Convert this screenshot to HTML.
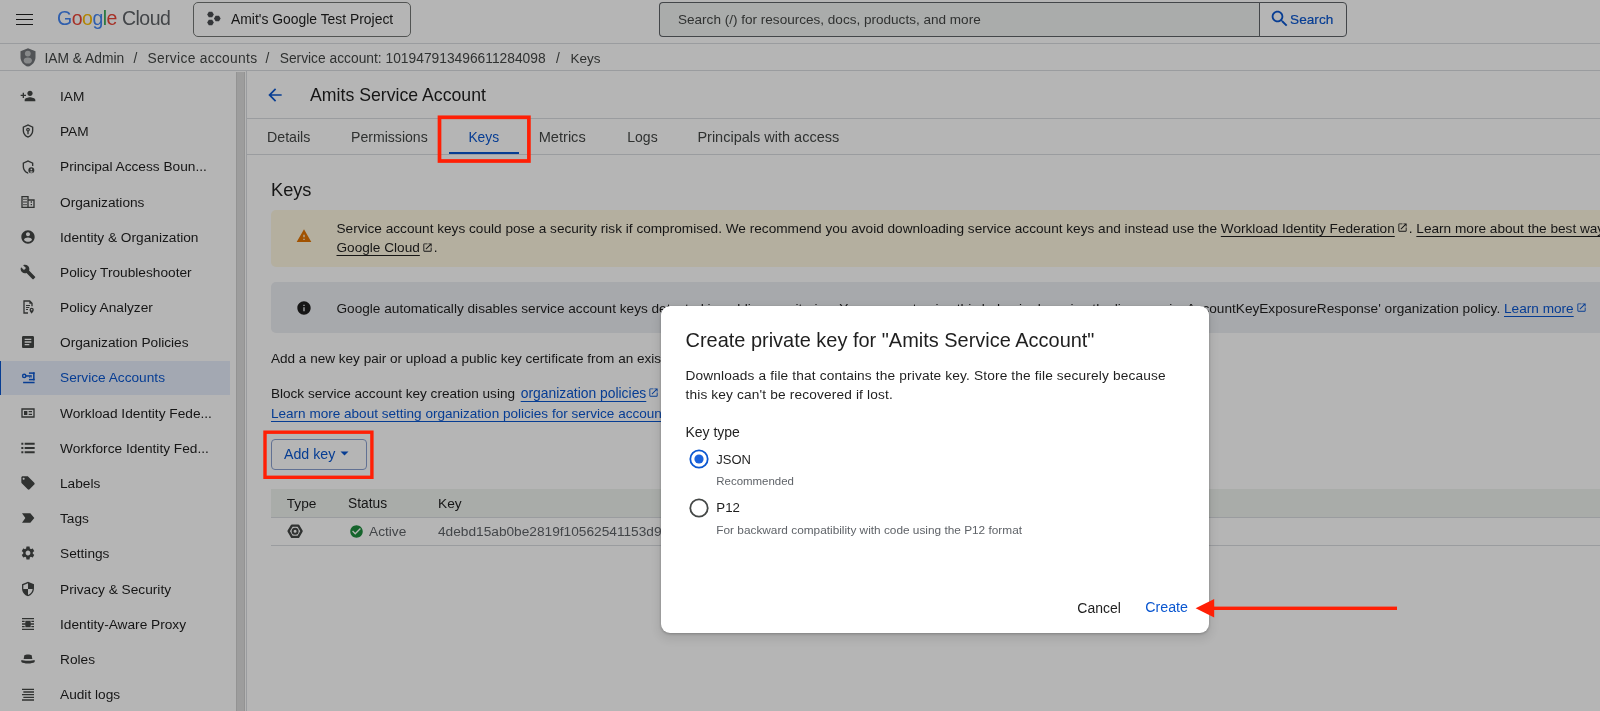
<!DOCTYPE html>
<html><head><meta charset="utf-8">
<style>
html,body{margin:0;padding:0}
body{width:1600px;height:711px;overflow:hidden;position:relative;background:#fff;font-family:"Liberation Sans",sans-serif;color:#1f1f1f}
.a{position:absolute}
.t{position:absolute;line-height:1;white-space:nowrap}
.ln{position:absolute;background:#dadce0}
svg{position:absolute;overflow:visible}
.ext{position:static;display:inline-block;vertical-align:-0.5px;margin:0 1px 0 2px}
u{text-decoration-skip-ink:none;text-underline-offset:2.5px;text-decoration-thickness:1px}
#ov{position:absolute;left:0;top:0;width:1600px;height:711px;background:rgba(0,0,0,0.29)}
.nav .t{font-size:13.7px;color:#1f1f1f;left:60px}
.nav svg{left:20px;width:16px;height:16px}
</style></head><body>
<div id="page" style="position:absolute;left:0;top:0;width:1600px;height:711px;will-change:transform">
<!-- TOP BAR -->
<div class="ln" style="left:0;top:43px;width:1600px;height:1px"></div>
<div class="a" style="left:16px;top:13.6px;width:17px;height:1.7px;background:#1f1f1f"></div>
<div class="a" style="left:16px;top:18.6px;width:17px;height:1.7px;background:#1f1f1f"></div>
<div class="a" style="left:16px;top:23.6px;width:17px;height:1.7px;background:#1f1f1f"></div>
<div class="t" style="left:57px;top:9.3px;font-size:19.5px;letter-spacing:-0.5px"><span style="color:#4285f4">G</span><span style="color:#ea4335">o</span><span style="color:#fbbc04">o</span><span style="color:#4285f4">g</span><span style="color:#34a853">l</span><span style="color:#ea4335">e</span> <span style="color:#5f6368">Cloud</span></div>
<div class="a" style="left:192.5px;top:2px;width:216px;height:33px;border:1px solid #747775;border-radius:5px"></div>
<svg style="left:200px;top:5px" width="30" height="25" viewBox="0 0 30 25"><path fill="#4a4d51" d="M7.15 9.50L8.82 6.75H12.18L13.85 9.50L12.18 12.25H8.82zM13.95 13.50L15.62 10.75H18.98L20.65 13.50L18.98 16.25H15.62zM7.15 17.60L8.82 14.85H12.18L13.85 17.60L12.18 20.35H8.82z"/></svg>
<div class="t" style="left:231px;top:13.2px;font-size:13.9px;color:#1f1f1f">Amit's Google Test Project</div>
<div class="a" style="left:659px;top:2px;width:600px;height:33px;border:1px solid #5f6368;border-right:none;border-radius:4px 0 0 4px;background:#f0f2f1"></div>
<div class="a" style="left:1259px;top:2px;width:86px;height:33px;border:1px solid #5f6368;border-radius:0 4px 4px 0;background:#fff"></div>
<div class="t" style="left:678px;top:12.5px;font-size:13.56px;color:#444746">Search (/) for resources, docs, products, and more</div>
<svg style="left:1268.5px;top:8.2px" width="21.5" height="21.5" viewBox="0 0 24 24"><path fill="#0b57d0" d="M15.5 14h-.79l-.28-.27C15.41 12.59 16 11.110 16 9.5 16 5.91 13.09 3 9.5 3S3 5.910 3 9.5 5.91 16 9.5 16c1.61 0 3.09-.59 4.23-1.57l.27.28v.79l5 4.99L20.49 19l-4.99-5zm-6 0C7.01 14 5 11.99 5 9.5S7.01 5 9.5 5 14 7.01 14 9.5 11.99 14 9.5 14z"/></svg>
<div class="t" style="left:1290px;top:13.1px;font-size:13.6px;color:#0b57d0;-webkit-text-stroke:0.2px #0b57d0;letter-spacing:0.06px">Search</div>

<!-- BREADCRUMB -->
<div class="ln" style="left:0;top:70px;width:1600px;height:1px"></div>
<svg style="left:20px;top:48px" width="16" height="19" viewBox="0 0 16 19"><path fill="#72767a" d="M8 0.3L0.5 3.3v5.6c0 4.5 3.2 8.6 7.5 9.7 4.3-1.1 7.5-5.2 7.5-9.7V3.3z"/><circle cx="7.8" cy="5.6" r="2.9" fill="#fff" opacity=".55"/><ellipse cx="7.8" cy="12.5" rx="4.1" ry="3.1" fill="#fff" opacity=".55"/></svg>
<div class="t" style="left:44.4px;top:51.9px;font-size:13.8px;color:#444746">IAM &amp; Admin</div>
<div class="t" style="left:133.5px;top:51.9px;font-size:13.8px;color:#444746">/</div>
<div class="t" style="left:147.5px;top:51.9px;font-size:13.8px;color:#444746;letter-spacing:0.3px">Service accounts</div>
<div class="t" style="left:265.5px;top:51.9px;font-size:13.8px;color:#444746">/</div>
<div class="t" style="left:279.7px;top:51.9px;font-size:13.8px;color:#444746">Service account: 101947913496611284098</div>
<div class="t" style="left:556px;top:51.9px;font-size:13.8px;color:#444746">/</div>
<div class="t" style="left:570.6px;top:51.9px;font-size:13.5px;color:#444746">Keys</div>

<!-- SIDEBAR -->
<div class="a" style="left:236px;top:72px;width:7px;height:639px;background:#dedede;border-left:1px solid #d0d0d0;border-right:1px solid #d0d0d0"></div>
<div class="ln" style="left:246px;top:71px;width:1px;height:640px"></div>
<div class="a" style="left:0;top:360.5px;width:230px;height:34.5px;background:#e6edfb"></div>
<div class="a" style="left:0;top:360.8px;width:1px;height:34.2px;background:#0b57d0"></div>
<!--NAV--><div class="nav">
<svg style="left:19.5px;top:88.1px" width="17" height="17" viewBox="0 0 24 24"><g fill="#444746"><path d="M15 12c2.21 0 4-1.79 4-4s-1.79-4-4-4-4 1.79-4 4 1.79 4 4 4zm-9-2V7H4v3H1v2h3v3h2v-3h3v-2H6zm9 4c-2.67 0-8 1.34-8 4v2h16v-2c0-2.660-5.33-4-8-4z"/></g></svg>
<div class="t" style="top:90.0px;color:#1f1f1f">IAM</div>
<svg style="left:19.5px;top:123.3px" width="17" height="17" viewBox="0 0 24 24"><g fill="#444746"><path d="M12 2L4 5.5v5.6c0 5 3.4 9.7 8 10.9 4.6-1.2 8-5.9 8-10.9V5.5zm0 2.2l6 2.6v4.3c0 3.9-2.5 7.6-6 8.7-3.5-1.1-6-4.8-6-8.7V6.8z"/><path d="M12 7a3 3 0 0 0-1 5.8V17h2v-4.2A3 3 0 0 0 12 7zm0 2a1 1 0 1 1 0 2 1 1 0 0 1 0-2z"/></g></svg>
<div class="t" style="top:125.2px;color:#1f1f1f">PAM</div>
<svg style="left:19.5px;top:158.5px" width="17" height="17" viewBox="0 0 24 24"><g fill="#444746"><path d="M12 2L4 5.5v5.6c0 5 3.4 9.7 8 10.9l.6-.2-.6-1.9c-3.5-1.1-6-4.8-6-8.7V6.8l6-2.6 6 2.6v3.7h2V5.5z"/><path d="M17 12.5a4.5 4.5 0 1 0 0 9 4.5 4.5 0 0 0 0-9zm0 1.8a1.3 1.3 0 1 1 0 2.6 1.3 1.3 0 0 1 0-2.6zm-2.6 5.2c.6-.9 1.6-1.3 2.6-1.3s2 .4 2.6 1.3c-.7.7-1.6 1.1-2.6 1.1s-1.9-.4-2.6-1.1z"/></g></svg>
<div class="t" style="top:160.4px;color:#1f1f1f">Principal Access Boun...</div>
<svg style="left:19.5px;top:193.6px" width="17" height="17" viewBox="0 0 24 24"><g fill="#444746"><path d="M2 3h11v18H2zm2 2v14h7V5zm1 2h2v2H5zm3 0h2v2H8zM5 11h2v2H5zm3 0h2v2H8zM5 15h2v2H5zm3 0h2v2H8zM13 8h9v13h-9v-2h7v-9h-7zm3 3h2v2h-2zm0 4h2v2h-2z"/></g></svg>
<div class="t" style="top:195.5px;color:#1f1f1f">Organizations</div>
<svg style="left:19.5px;top:228.8px" width="17" height="17" viewBox="0 0 24 24"><g fill="#444746"><path d="M12 2C6.48 2 2 6.48 2 12s4.48 10 10 10 10-4.48 10-10S17.52 2 12 2zm0 3c1.66 0 3 1.34 3 3s-1.34 3-3 3-3-1.34-3-3 1.34-3 3-3zm0 14.2c-2.5 0-4.71-1.28-6-3.22.03-1.99 4-3.08 6-3.08 1.99 0 5.97 1.09 6 3.08-1.29 1.94-3.5 3.22-6 3.22z"/></g></svg>
<div class="t" style="top:230.7px;color:#1f1f1f">Identity &amp; Organization</div>
<svg style="left:19.5px;top:264.0px" width="17" height="17" viewBox="0 0 24 24"><g fill="#444746"><path d="M22.7 19l-9.1-9.1c.9-2.3.4-5-1.5-6.9-2-2-5-2.4-7.4-1.3L9 6 6 9 1.6 4.7C.4 7.1.9 10.1 2.9 12.1c1.9 1.9 4.6 2.4 6.9 1.5l9.1 9.1c.4.4 1 .4 1.4 0l2.3-2.3c.5-.4.5-1.1.1-1.4z"/></g></svg>
<div class="t" style="top:265.9px;color:#1f1f1f">Policy Troubleshooter</div>
<svg style="left:19.5px;top:299.2px" width="17" height="17" viewBox="0 0 24 24"><g fill="#444746"><path d="M5 2h10l4 4v5h-2V7h-3V4H7v16h5v2H5zm4 7h6v1.6H9zm0 3h5v1.6H9zm0 3h3v1.6H9z"/><path d="M17.5 13a3.2 3.2 0 0 0-3.2 3.2c0 2.3 3.2 5.8 3.2 5.8s3.2-3.5 3.2-5.8a3.2 3.2 0 0 0-3.2-3.2zm0 4.4a1.2 1.2 0 1 1 0-2.400 1.2 1.2 0 0 1 0 2.4z"/></g></svg>
<div class="t" style="top:301.1px;color:#1f1f1f">Policy Analyzer</div>
<svg style="left:19.5px;top:334.4px" width="17" height="17" viewBox="0 0 24 24"><g fill="#444746"><path d="M19 3H5c-1.1 0-2 .9-2 2v14c0 1.1.9 2 2 2h14c1.1 0 2-.9 2-2V5c0-1.1-.9-2-2-2zm-5 14H7v-2h7v2zm3-4H7v-2h10v2zm0-4H7V7h10v2z"/></g></svg>
<div class="t" style="top:336.3px;color:#1f1f1f">Organization Policies</div>
<svg style="left:19.5px;top:369.54px" width="17" height="17" viewBox="0 0 17 17"><g fill="#0b57d0"><circle cx="4.5" cy="6.3" r="1.75" fill="none" stroke="#0b57d0" stroke-width="1.5"/><rect x="6" y="5.5" width="6.5" height="1.6"/><rect x="9.6" y="7" width="1.1" height="1.1"/><rect x="11.2" y="7" width="1.1" height="1.1"/><rect x="9.5" y="2.5" width="6" height="1.6"/><rect x="13.9" y="2.5" width="1.6" height="8.5"/><rect x="9.5" y="9.4" width="6" height="1.6"/><rect x="3.3" y="12.5" width="12.2" height="1.6"/></g></svg>
<div class="t" style="top:371.4px;color:#0b57d0">Service Accounts</div>
<svg style="left:19.5px;top:404.7px" width="17" height="17" viewBox="0 0 24 24"><g fill="#444746"><path d="M2 5h20v14H2zm2 2v10h16V7zm2 2h5v6H6zm7 0h5v2h-5zm0 4h5v2h-5z"/></g></svg>
<div class="t" style="top:406.6px;color:#1f1f1f">Workload Identity Fede...</div>
<svg style="left:19.5px;top:439.9px" width="17" height="17" viewBox="0 0 24 24"><g fill="#444746"><path d="M2 4h3v3H2zm0 6.5h3v3H2zm0 6.5h3v3H2zM7 4h15v3H7zm0 6.5h15v3H7zm0 6.5h15v3H7z"/></g></svg>
<div class="t" style="top:441.8px;color:#1f1f1f">Workforce Identity Fed...</div>
<svg style="left:19.5px;top:475.1px" width="17" height="17" viewBox="0 0 24 24"><g fill="#444746"><path d="M21.41 11.58l-9-9C12.05 2.22 11.55 2 11 2H4c-1.1 0-2 .9-2 2v7c0 .55.22 1.05.59 1.42l9 9c.36.36.86.58 1.41.58.55 0 1.05-.22 1.41-.59l7-7c.37-.36.59-.86.59-1.41 0-.55-.23-1.06-.59-1.42zM5.5 7C4.67 7 4 6.33 4 5.5S4.67 4 5.5 4 7 4.67 7 5.5 6.33 7 5.5 7z"/></g></svg>
<div class="t" style="top:477.0px;color:#1f1f1f">Labels</div>
<svg style="left:19.5px;top:510.3px" width="17" height="17" viewBox="0 0 24 24"><g fill="#444746"><path d="M3 5h12.5l6 7-6 7H3l5-7z"/></g></svg>
<div class="t" style="top:512.2px;color:#1f1f1f">Tags</div>
<svg style="left:19.5px;top:545.4px" width="17" height="17" viewBox="0 0 24 24"><g fill="#444746"><path d="M19.14 12.94c.04-.3.06-.61.06-.94 0-.32-.02-.64-.07-.94l2.03-1.58c.18-.14.23-.41.12-.61l-1.92-3.32c-.12-.22-.37-.29-.59-.22l-2.39.96c-.5-.38-1.03-.7-1.62-.94l-.36-2.54c-.04-.24-.24-.41-.48-.41h-3.84c-.24 0-.43.17-.47.41l-.36 2.54c-.59.24-1.13.57-1.62.94l-2.39-.96c-.22-.08-.47 0-.59.22L2.74 8.87c-.12.21-.08.47.12.61l2.03 1.58c-.05.3-.09.63-.09.94s.02.64.07.94l-2.03 1.58c-.18.14-.23.41-.12.61l1.92 3.320c.12.22.37.29.59.22l2.39-.96c.5.38 1.03.7 1.62.94l.36 2.54c.05.24.24.41.48.41h3.84c.24 0 .44-.17.47-.41l.36-2.54c.59-.24 1.13-.56 1.62-.94l2.39.96c.22.08.47 0 .59-.22l1.92-3.32c.12-.22.07-.47-.12-.61l-2.01-1.58zM12 15.6c-1.98 0-3.6-1.62-3.6-3.6s1.62-3.6 3.6-3.6 3.6 1.62 3.6 3.6-1.62 3.6-3.6 3.6z"/></g></svg>
<div class="t" style="top:547.3px;color:#1f1f1f">Settings</div>
<svg style="left:19.5px;top:580.6px" width="17" height="17" viewBox="0 0 24 24"><g fill="#444746"><path d="M12 1L3 5v6c0 5.55 3.84 10.74 9 12 5.16-1.26 9-6.45 9-12V5l-9-4zm0 10.99h7c-.53 4.12-3.28 7.79-7 8.94V12H5V6.3l7-3.110v8.8z"/></g></svg>
<div class="t" style="top:582.5px;color:#1f1f1f">Privacy &amp; Security</div>
<svg style="left:19.5px;top:615.8px" width="17" height="17" viewBox="0 0 24 24"><g fill="#444746"><path d="M3 3h18v2H3zm0 16h18v2H3zM3 7h4v2H3zm14 0h4v2h-4zM3 15h4v2H3zm14 0h4v2h-4zM3 11h18v2H3zM8 7h8v10H8z"/></g></svg>
<div class="t" style="top:617.7px;color:#1f1f1f">Identity-Aware Proxy</div>
<svg style="left:19.5px;top:651.0px" width="17" height="17" viewBox="0 0 24 24"><g fill="#444746"><path d="M6.5 6.5c1.2-.8 3.2-1.3 5.5-1.3s4.3.5 5.5 1.3l1 5.5H5.5zM2 13.5c2 .7 5.5 1.2 10 1.2s8-.5 10-1.2v3c-2 1.4-5.5 2.3-10 2.3s-8-.9-10-2.3z"/></g></svg>
<div class="t" style="top:652.9px;color:#1f1f1f">Roles</div>
<svg style="left:19.5px;top:686.2px" width="17" height="17" viewBox="0 0 24 24"><g fill="#444746"><path d="M3 4h18v2H3zm2 4h16v2H5zm-2 4h18v2H3zm2 4h16v2H5zm-2 4h18v2H3z"/></g></svg>
<div class="t" style="top:688.1px;color:#1f1f1f">Audit logs</div>
</div><!--/NAV-->

<!-- MAIN HEADER -->
<svg style="left:265px;top:85px" width="20" height="20" viewBox="0 0 24 24"><path fill="#0b57d0" d="M20 11H7.83l5.59-5.59L12 4l-8 8 8 8 1.41-1.41L7.83 13H20v-2z"/></svg>
<div class="t" style="left:310px;top:86.5px;font-size:17.7px;color:#1f1f1f">Amits Service Account</div>
<div class="ln" style="left:247px;top:118px;width:1353px;height:1px"></div>
<div class="t" style="left:267px;top:129.5px;font-size:14.2px;color:#444746">Details</div>
<div class="t" style="left:351px;top:129.5px;font-size:14.1px;color:#444746">Permissions</div>
<div class="t" style="left:468.4px;top:130.9px;font-size:13.8px;color:#0b57d0">Keys</div>
<div class="t" style="left:538.7px;top:129.5px;font-size:14.6px;color:#444746">Metrics</div>
<div class="t" style="left:627.3px;top:129.5px;font-size:14px;color:#444746">Logs</div>
<div class="t" style="left:697.4px;top:129.5px;font-size:14.5px;color:#444746">Principals with access</div>
<div class="a" style="left:448.5px;top:152px;width:70.5px;height:2px;background:#0b57d0"></div>
<div class="ln" style="left:247px;top:154px;width:1353px;height:1px"></div>

<!-- KEYS CONTENT -->
<div class="t" style="left:271px;top:180.8px;font-size:18.2px;color:#1f1f1f">Keys</div>
<div class="a" style="left:271px;top:210px;width:1400px;height:56.6px;background:#fef7e0;border-radius:5px"></div>
<svg style="left:296px;top:228px" width="16" height="16" viewBox="0 0 24 24"><path fill="#e37400" d="M1 21h22L12 2 1 21zm12-3h-2v-2h2v2zm0-4h-2v-4h2v4z"/></svg>
<div class="t" style="left:336.5px;top:221.5px;font-size:13.64px;color:#1f1f1f">Service account keys could pose a security risk if compromised. We recommend you avoid downloading service account keys and instead use the <u>Workload Identity Federation</u><svg class="ext" width="11" height="11" viewBox="0 0 24 24"><path fill="#1f1f1f" d="M19 19H5V5h7V3H5c-1.11 0-2 .9-2 2v14c0 1.1.89 2 2 2h14c1.1 0 2-.9 2-2v-7h-2v7zM14 3v2h3.59l-9.830 9.83 1.41 1.41L19 6.41V10h2V3h-7z"/></svg>. <u>Learn more about the best way to secure service account keys on</u></div>
<div class="t" style="left:336.5px;top:241px;font-size:13.64px;color:#1f1f1f"><u>Google Cloud</u><svg class="ext" width="11" height="11" viewBox="0 0 24 24"><path fill="#1f1f1f" d="M19 19H5V5h7V3H5c-1.11 0-2 .9-2 2v14c0 1.1.89 2 2 2h14c1.1 0 2-.9 2-2v-7h-2v7zM14 3v2h3.59l-9.830 9.83 1.41 1.41L19 6.41V10h2V3h-7z"/></svg>.</div>
<div class="a" style="left:271px;top:282px;width:1400px;height:50.7px;background:#eceef2;border-radius:5px"></div>
<svg style="left:295.5px;top:299.5px" width="16" height="16" viewBox="0 0 24 24"><path fill="#1f1f1f" d="M12 2C6.48 2 2 6.48 2 12s4.48 10 10 10 10-4.48 10-10S17.52 2 12 2zm1 15h-2v-6h2v6zm0-8h-2V7h2v2z"/></svg>
<div class="t" style="left:336.5px;top:301.7px;font-size:13.64px;color:#1f1f1f">Google automatically disables service account keys detected in public repositories. You can customize this behavior by using the 'iam.serviceAccountKeyExposureResponse' organization policy. <u style="color:#0b57d0">Learn more</u><svg class="ext" width="11" height="11" viewBox="0 0 24 24"><path fill="#0b57d0" d="M19 19H5V5h7V3H5c-1.11 0-2 .9-2 2v14c0 1.1.89 2 2 2h14c1.1 0 2-.9 2-2v-7h-2v7zM14 3v2h3.59l-9.830 9.83 1.41 1.41L19 6.41V10h2V3h-7z"/></svg></div>

<div class="t" style="left:271px;top:352px;font-size:13.55px;color:#1f1f1f">Add a new key pair or upload a public key certificate from an existing service account.</div>
<div class="t" style="left:271px;top:386.9px;font-size:13.55px;color:#1f1f1f"><span>Block service account key creation using</span></div>
<div class="t" style="left:520.7px;top:386.9px;font-size:13.87px;color:#0b57d0"><u>organization policies</u><svg class="ext" width="11" height="11" viewBox="0 0 24 24"><path fill="#0b57d0" d="M19 19H5V5h7V3H5c-1.11 0-2 .9-2 2v14c0 1.1.89 2 2 2h14c1.1 0 2-.9 2-2v-7h-2v7zM14 3v2h3.59l-9.830 9.83 1.41 1.41L19 6.41V10h2V3h-7z"/></svg></div>
<div class="t" style="left:271px;top:406.5px;font-size:13.55px;color:#0b57d0"><u>Learn more about setting organization policies for service accounts</u></div>

<div class="a" style="left:271px;top:438.5px;width:93.5px;height:29.5px;border:1px solid #8aa0d0;border-radius:4px"></div>
<div class="t" style="left:284px;top:447px;font-size:14.2px;color:#0b57d0">Add key</div>
<svg style="left:340px;top:451px" width="9" height="5" viewBox="0 0 9 5"><path fill="#0b57d0" d="M0.5 0.5h8L4.5 4.5z"/></svg>

<div class="a" style="left:271px;top:489.3px;width:1329px;height:28px;background:#eef2ef"></div>
<div class="ln" style="left:271px;top:517px;width:1329px;height:1px"></div>
<div class="t" style="left:286.7px;top:497.2px;font-size:13.7px;color:#1f1f1f">Type</div>
<div class="t" style="left:348px;top:497.2px;font-size:13.8px;color:#1f1f1f">Status</div>
<div class="t" style="left:438px;top:497.2px;font-size:13.7px;color:#1f1f1f">Key</div>
<div class="ln" style="left:271px;top:545px;width:1329px;height:1px"></div>
<svg style="left:287px;top:524px" width="16" height="15" viewBox="0 0 16 15"><path fill="none" stroke="#444746" stroke-width="2.3" stroke-linejoin="round" d="M1.6 7.2L4.9 1.6h6.4l3.3 5.6-3.3 5.6H4.9z"/><circle cx="8.1" cy="7.2" r="2.5" fill="none" stroke="#444746" stroke-width="2"/></svg>
<svg style="left:348.5px;top:524px" width="15" height="15" viewBox="0 0 24 24"><path fill="#1e8e3e" d="M12 2C6.48 2 2 6.48 2 12s4.48 10 10 10 10-4.48 10-10S17.52 2 12 2zm-2 15l-5-5 1.41-1.41L10 14.17l7.59-7.59L19 8l-9 9z"/></svg>
<div class="t" style="left:369px;top:524.9px;font-size:13.7px;color:#5f6368">Active</div>
<div class="t" style="left:438px;top:524.9px;font-size:13.7px;color:#5f6368">4debd15ab0be2819f10562541153d9a8</div>
</div>

<div id="ov"></div>

<div id="dlg" style="position:absolute;left:0;top:0;width:1600px;height:711px;will-change:transform">
<!-- DIALOG -->
<div class="a" style="left:661px;top:305.5px;width:547.7px;height:327.5px;background:#fff;border-radius:9px;box-shadow:0 1px 3px rgba(0,0,0,0.25),0 4px 8px 3px rgba(0,0,0,0.08)"></div>
<div class="t" style="left:685.5px;top:330.6px;font-size:19.97px;color:#1f1f1f">Create private key for "Amits Service Account"</div>
<div class="t" style="left:685.5px;top:369px;font-size:13.7px;color:#1f1f1f;letter-spacing:0.15px">Downloads a file that contains the private key. Store the file securely because</div>
<div class="t" style="left:685.5px;top:387.8px;font-size:13.7px;color:#1f1f1f;letter-spacing:0.15px">this key can't be recovered if lost.</div>
<div class="t" style="left:685.4px;top:424.8px;font-size:14px;color:#1f1f1f">Key type</div>
<svg style="left:688.5px;top:449px" width="20" height="20" viewBox="0 0 20 20"><circle cx="10" cy="10" r="8.7" fill="none" stroke="#0b57d0" stroke-width="1.8"/><circle cx="10" cy="10" r="4.6" fill="#1a62dc"/></svg>
<div class="t" style="left:716.3px;top:452.7px;font-size:13px;color:#1f1f1f">JSON</div>
<div class="t" style="left:716.3px;top:476.3px;font-size:11.46px;color:#5f6368">Recommended</div>
<svg style="left:688.5px;top:497.7px" width="20" height="20" viewBox="0 0 20 20"><circle cx="10" cy="10" r="8.7" fill="none" stroke="#444746" stroke-width="1.8"/></svg>
<div class="t" style="left:716.3px;top:501.3px;font-size:13.26px;color:#1f1f1f">P12</div>
<div class="t" style="left:716.3px;top:525px;font-size:11.83px;color:#5f6368">For backward compatibility with code using the P12 format</div>
<div class="t" style="left:1077.3px;top:601.8px;font-size:13.97px;color:#1f1f1f">Cancel</div>
<div class="t" style="left:1145.2px;top:600.3px;font-size:14.26px;color:#0b57d0">Create</div>

<!-- ANNOTATIONS -->
<svg style="left:0;top:0" width="1600" height="711" viewBox="0 0 1600 711">
<rect x="439.5" y="117.3" width="89.4" height="43.7" fill="none" stroke="#ff1f05" stroke-width="3.7"/>
<rect x="265" y="432.2" width="106.9" height="45.1" fill="none" stroke="#ff1f05" stroke-width="3.4"/>
<rect x="1213" y="606.6" width="184" height="3.4" fill="#ff1f05"/>
<path d="M1195.6 608.3L1214.2 599V617.6z" fill="#ff1f05"/>
</svg>
</div>
</body></html>
